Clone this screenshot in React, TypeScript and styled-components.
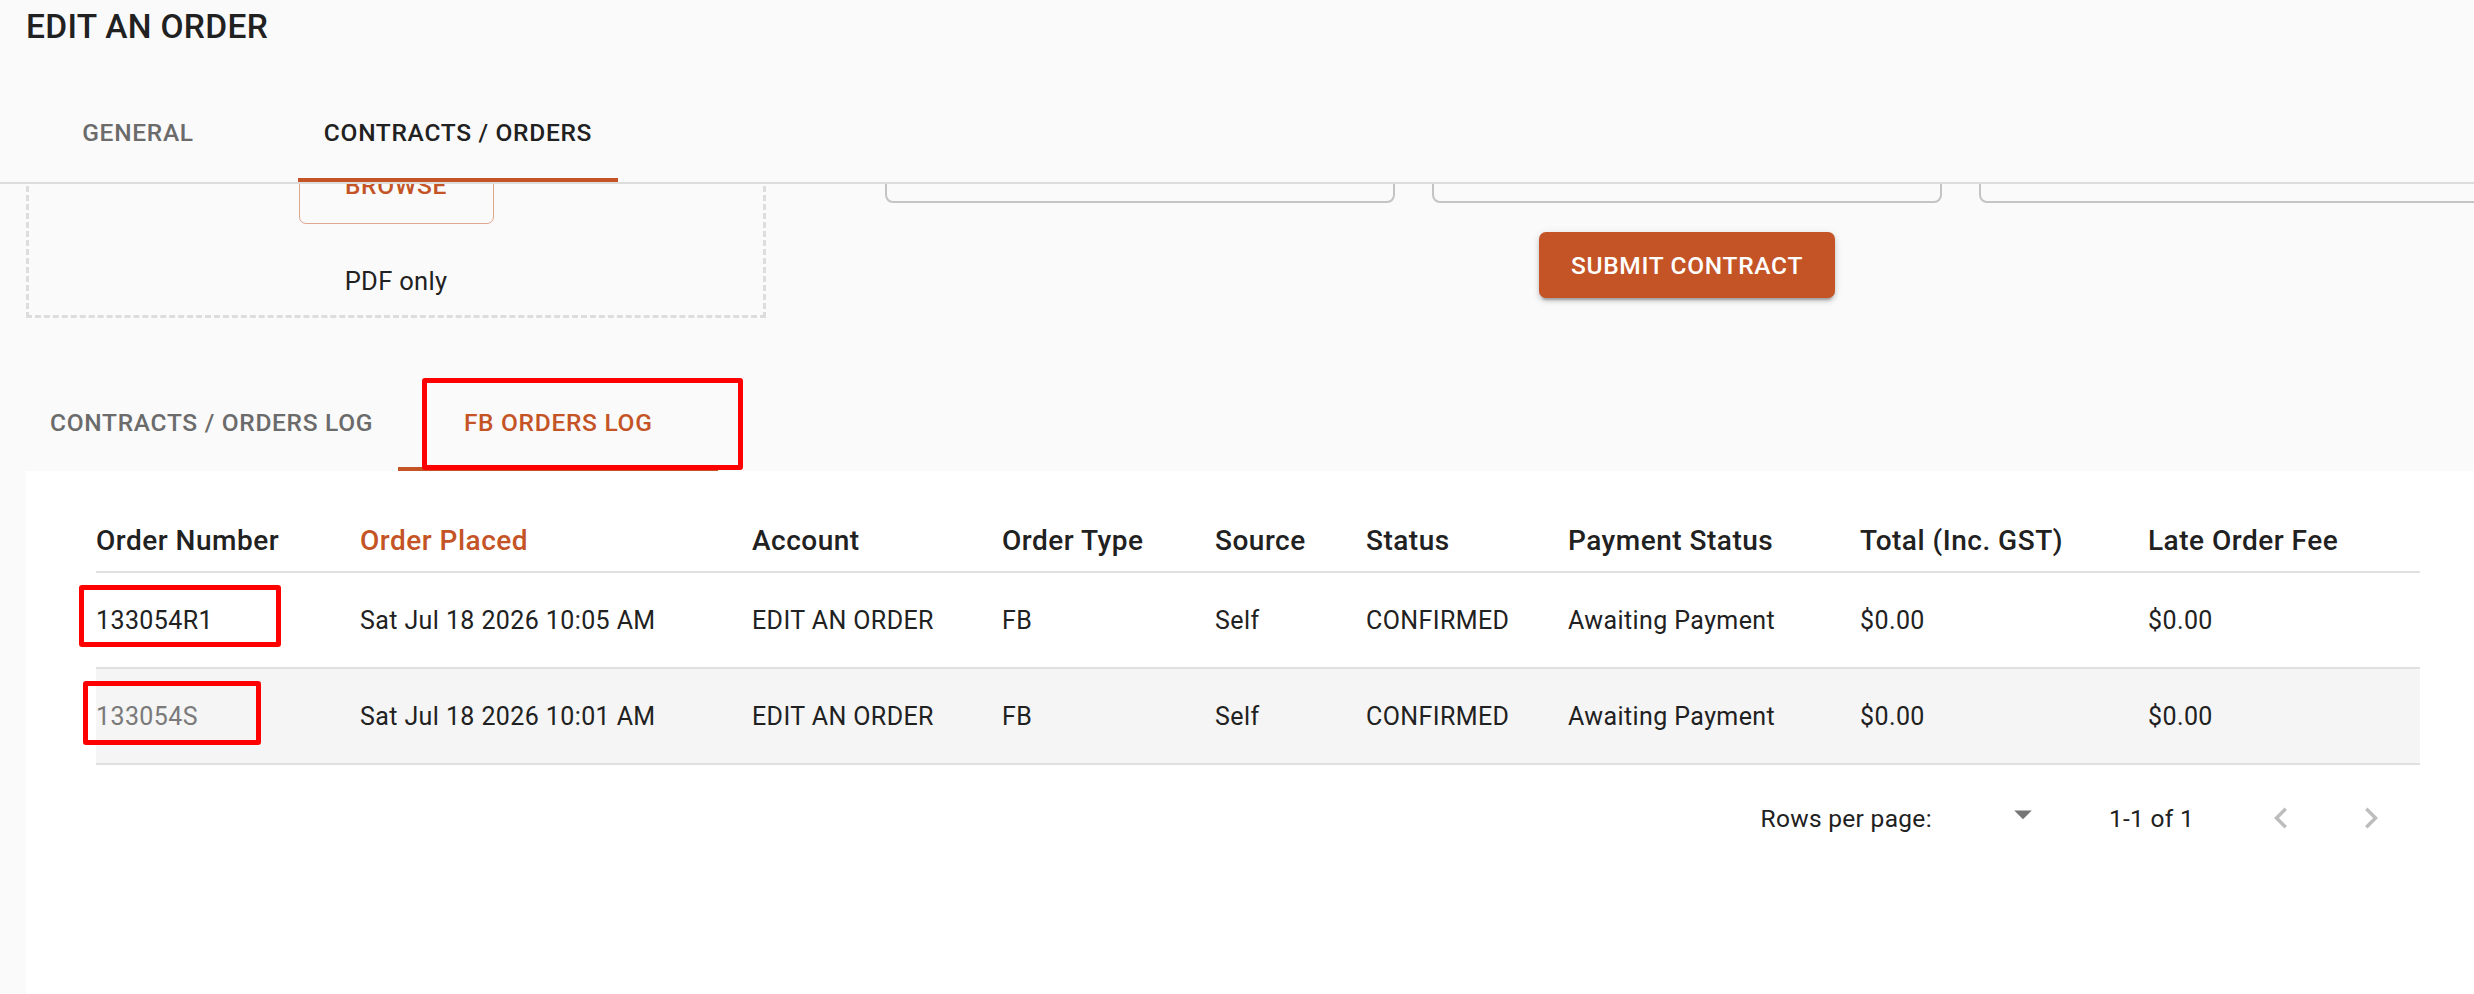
import React from "react";
import styled, { createGlobalStyle } from "styled-components";

const Accent = "#c45426";
const TextDark = "#212121";
const TextMuted = "#6b6b6b";
const DividerColor = "#e0e0e0";
const PageBg = "#fafafa";

const GlobalStyle = createGlobalStyle`
  * {
    box-sizing: border-box;
  }
  html,
  body {
    margin: 0;
    padding: 0;
    background: ${PageBg};
    overflow: hidden;
  }
  body {
    font-family: Roboto, "Liberation Sans", Arial, sans-serif;
    color: ${TextDark};
  }
`;

const Page = styled.div`
  width: 2516px;
  height: 994px;
  display: flex;
  flex-direction: column;
  overflow: hidden;
`;

/* ---------- top bar ---------- */

const Header = styled.header`
  position: sticky;
  top: 0;
  z-index: 2;
  background: ${PageBg};
  border-bottom: 2px solid #dcdcdc;
  padding: 6px 26px 0;
`;

const Title = styled.h1`
  margin: 0;
  font-size: 33.5px;
  font-weight: 500;
  line-height: 41px;
  letter-spacing: 0.3px;
  color: ${TextDark};
`;

const TabStrip = styled.nav<{ $offset: number }>`
  display: flex;
  margin-left: ${(p) => p.$offset}px;
`;

const TopTabs = styled(TabStrip)`
  margin-top: 51px;
`;

const Tab = styled.div<{ $active?: boolean; $activeColor: string; $pad: number }>`
  position: relative;
  min-width: 320px;
  height: 84px;
  padding: 0 25px ${(p) => p.$pad}px;
  display: flex;
  align-items: center;
  justify-content: center;
  font-size: 24.5px;
  font-weight: 500;
  letter-spacing: 0.7px;
  text-transform: uppercase;
  white-space: nowrap;
  color: ${(p) => (p.$active ? p.$activeColor : TextMuted)};

  &::after {
    content: "";
    position: absolute;
    left: 0;
    right: 0;
    bottom: 0;
    height: 4px;
    background: ${(p) => (p.$active ? Accent : "transparent")};
  }
`;

/* ---------- upload form (scrolled under the header) ---------- */

const Content = styled.main`
  flex: 1;
  display: flex;
  flex-direction: column;
  padding: 0 26px;
`;

const UploadRow = styled.section`
  display: flex;
  align-items: flex-start;
  margin-top: -79px;
`;

const DropZone = styled.div`
  width: 740px;
  flex-shrink: 0;
  border: 3px dashed #dddddd;
  padding: 39px 0 15px;
  display: flex;
  flex-direction: column;
  align-items: center;
`;

const BrowseButton = styled.button`
  width: 195px;
  height: 77px;
  border: 1.75px solid rgba(196, 84, 38, 0.5);
  border-radius: 7px;
  background: transparent;
  color: ${Accent};
  font-family: inherit;
  font-size: 24.5px;
  font-weight: 500;
  letter-spacing: 0.7px;
  text-transform: uppercase;
`;

const Hint = styled.div`
  margin-top: 39px;
  font-size: 25.5px;
  line-height: 37px;
  letter-spacing: 0.3px;
  color: ${TextDark};
`;

const ContractColumn = styled.div`
  width: 1604px;
  flex-shrink: 0;
  margin-left: 119px;
  display: flex;
  flex-direction: column;
  align-items: center;
`;

const FieldRow = styled.div`
  width: 100%;
  display: grid;
  grid-template-columns: repeat(3, 1fr);
  gap: 37px;
`;

const Field = styled.div`
  height: 98px;
  border: 2px solid #c4c4c4;
  border-radius: 8px;
`;

const SubmitButton = styled.button`
  margin-top: 29px;
  height: 66px;
  padding: 0 32px;
  border: none;
  border-radius: 7px;
  background: ${Accent};
  color: #ffffff;
  font-family: inherit;
  font-size: 24.5px;
  font-weight: 500;
  letter-spacing: 0.7px;
  text-transform: uppercase;
  box-shadow: 0 5px 2px -3px rgba(0, 0, 0, 0.2), 0 3px 4px 0 rgba(0, 0, 0, 0.14),
    0 2px 9px 0 rgba(0, 0, 0, 0.12);
`;

/* ---------- orders log ---------- */

const LogTabs = styled(TabStrip)`
  margin-top: 69px;
`;

const Marker = styled.span<{ $left: number; $top: number; $width: number; $height: number }>`
  position: absolute;
  left: ${(p) => p.$left}px;
  top: ${(p) => p.$top}px;
  width: ${(p) => p.$width}px;
  height: ${(p) => p.$height}px;
  border: 5px solid #ff0000;
  border-radius: 3px;
  z-index: 1;
  pointer-events: none;
`;

const Card = styled.div`
  flex: 1;
  background: #ffffff;
  padding: 50px 70px 0;
`;

const COLUMNS = "264px 392px 250px 213px 151px 202px 292px 288px 1fr";

const HeadRow = styled.div`
  display: grid;
  grid-template-columns: ${COLUMNS};
  border-bottom: 2px solid ${DividerColor};
  padding-bottom: 10px;
`;

const HeadCell = styled.div<{ $sorted?: boolean }>`
  font-size: 28px;
  font-weight: 500;
  line-height: 40px;
  letter-spacing: 0.5px;
  white-space: nowrap;
  color: ${(p) => (p.$sorted ? Accent : TextDark)};
`;

const Row = styled.div<{ $shaded?: boolean }>`
  position: relative;
  display: grid;
  grid-template-columns: ${COLUMNS};
  align-items: center;
  height: 96px;
  border-bottom: 2px solid ${DividerColor};
  background: ${(p) => (p.$shaded ? "#f5f5f5" : "transparent")};
`;

const Cell = styled.div<{ $muted?: boolean }>`
  font-size: 25px;
  letter-spacing: 0.4px;
  white-space: nowrap;
  color: ${(p) => (p.$muted ? "#7a7a7a" : TextDark)};
`;

const Pagination = styled.div`
  height: 106px;
  display: flex;
  align-items: center;
  justify-content: flex-end;
  padding-right: 7px;
  font-size: 24.5px;
  letter-spacing: 0.3px;
  color: ${TextDark};
`;

const SelectIcon = styled.span`
  display: flex;
  margin: -9px 0 0 70px;
  color: #757575;
`;

const PageCount = styled.span`
  margin-left: 65px;
`;

const NavButton = styled.button<{ $gap: number }>`
  width: 84px;
  height: 84px;
  margin-left: ${(p) => p.$gap}px;
  padding: 0;
  border: none;
  background: transparent;
  display: flex;
  align-items: center;
  justify-content: center;
  color: #bdbdbd;
`;

const Icon = ({ d }: { d: string }) => (
  <svg width="42" height="42" viewBox="0 0 24 24" fill="currentColor">
    <path d={d} />
  </svg>
);

const ICON_DROPDOWN = "M7 10l5 5 5-5z";
const ICON_PREV = "M15.41 16.59L10.83 12l4.58-4.59L14 6l-6 6 6 6 1.41-1.41z";
const ICON_NEXT = "M8.59 16.59L13.17 12 8.59 7.41 10 6l6 6-6 6-1.41-1.41z";

type Order = {
  number: string;
  placed: string;
  account: string;
  type: string;
  source: string;
  status: string;
  payment: string;
  total: string;
  fee: string;
  marker: { left: number; top: number; width: number; height: number };
};

const headings = [
  "Order Number",
  "Order Placed",
  "Account",
  "Order Type",
  "Source",
  "Status",
  "Payment Status",
  "Total (Inc. GST)",
  "Late Order Fee",
];

const orders: Order[] = [
  {
    number: "133054R1",
    placed: "Sat Jul 18 2026 10:05 AM",
    account: "EDIT AN ORDER",
    type: "FB",
    source: "Self",
    status: "CONFIRMED",
    payment: "Awaiting Payment",
    total: "$0.00",
    fee: "$0.00",
    marker: { left: -17, top: 12, width: 202, height: 62 },
  },
  {
    number: "133054S",
    placed: "Sat Jul 18 2026 10:01 AM",
    account: "EDIT AN ORDER",
    type: "FB",
    source: "Self",
    status: "CONFIRMED",
    payment: "Awaiting Payment",
    total: "$0.00",
    fee: "$0.00",
    marker: { left: -13, top: 12, width: 178, height: 64 },
  },
];

const App = () => {
  return (
    <Page>
      <GlobalStyle />
      <Header>
        <Title>EDIT AN ORDER</Title>
        <TopTabs $offset={-48}>
          <Tab $activeColor={TextDark} $pad={16}>
            General
          </Tab>
          <Tab $active $activeColor={TextDark} $pad={16}>
            Contracts / Orders
          </Tab>
        </TopTabs>
      </Header>

      <Content>
        <UploadRow>
          <DropZone>
            <BrowseButton>Browse</BrowseButton>
            <Hint>PDF only</Hint>
          </DropZone>
          <ContractColumn>
            <FieldRow>
              <Field />
              <Field />
              <Field />
            </FieldRow>
            <SubmitButton>Submit Contract</SubmitButton>
          </ContractColumn>
        </UploadRow>

        <LogTabs $offset={-1}>
          <Tab $activeColor={Accent} $pad={14}>
            Contracts / Orders Log
          </Tab>
          <Tab $active $activeColor={Accent} $pad={14}>
            FB Orders Log
            <Marker $left={24} $top={-9} $width={321} $height={92} />
          </Tab>
        </LogTabs>

        <Card>
          <HeadRow>
            {headings.map((h) => (
              <HeadCell key={h} $sorted={h === "Order Placed"}>
                {h}
              </HeadCell>
            ))}
          </HeadRow>
          {orders.map((o, i) => (
            <Row key={o.number} $shaded={i % 2 === 1}>
              <Cell $muted={i === 1}>{o.number}</Cell>
              <Cell>{o.placed}</Cell>
              <Cell>{o.account}</Cell>
              <Cell>{o.type}</Cell>
              <Cell>{o.source}</Cell>
              <Cell>{o.status}</Cell>
              <Cell>{o.payment}</Cell>
              <Cell>{o.total}</Cell>
              <Cell>{o.fee}</Cell>
              <Marker
                $left={o.marker.left}
                $top={o.marker.top}
                $width={o.marker.width}
                $height={o.marker.height}
              />
            </Row>
          ))}
          <Pagination>
            <span>Rows per page:</span>
            <SelectIcon>
              <Icon d={ICON_DROPDOWN} />
            </SelectIcon>
            <PageCount>1-1 of 1</PageCount>
            <NavButton $gap={45} aria-label="Previous page">
              <Icon d={ICON_PREV} />
            </NavButton>
            <NavButton $gap={6} aria-label="Next page">
              <Icon d={ICON_NEXT} />
            </NavButton>
          </Pagination>
        </Card>
      </Content>
    </Page>
  );
};

export default App;
